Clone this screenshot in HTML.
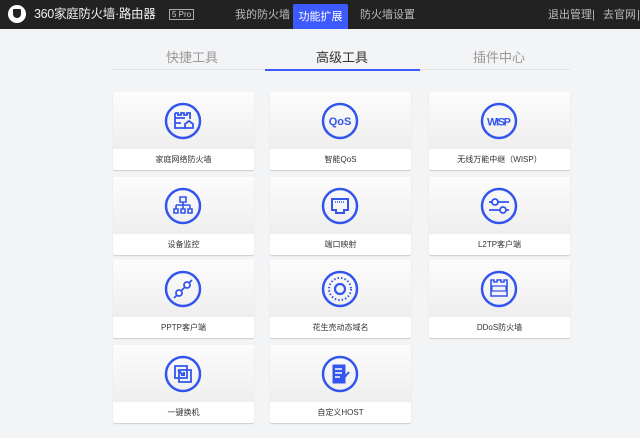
<!DOCTYPE html>
<html><head><meta charset="utf-8"><style>
*{margin:0;padding:0;box-sizing:border-box}
body{width:640px;height:438px;background:#f3f4f6;font-family:"Liberation Sans","Noto Sans CJK SC",sans-serif;position:relative;overflow:hidden}
.hd{position:absolute;left:0;top:0;width:640px;height:29px;background:#222;color:#bbb;font-size:11px}
.hd span{position:absolute;top:9px;white-space:nowrap;line-height:13px}
.logo{position:absolute;left:8px;top:5px;width:18px;height:18px;border-radius:50%;background:#fff}
.logo:after{content:"";position:absolute;left:5px;top:4px;width:8px;height:9px;background:#222;border-radius:1px 1px 4px 4px}
.brand{left:34px;color:#eee;font-size:12.5px!important;top:8px!important;letter-spacing:-0.3px}
.pro{position:absolute;left:169px;top:9px;border:1px solid #aaa;color:#ccc;font-size:8px;padding:0 2px;line-height:9px;white-space:nowrap}
.act{position:absolute;left:293px;top:4px;width:55px;height:25px;background:#3d5afe;color:#fff;font-size:11px;text-align:center;line-height:27px;border-radius:2px 2px 0 0}
.st{position:absolute;top:47px;font-size:13px;color:#999}
.line{position:absolute;left:112px;top:69px;width:458px;height:1px;background:#e2e3e6}
.uline{position:absolute;left:265px;top:69px;width:155px;height:2px;background:#3d5afe}
.card{position:absolute;width:141px;height:78px;background:#fff;border-radius:2px;box-shadow:0 1px 1px #ccc}
.top{height:57px;background:linear-gradient(#fcfcfc,#eeeeee);border-radius:2px 2px 0 0;position:relative}
.top svg{position:absolute;left:51px;top:10px}
.lb{font-size:8px;color:#333;text-align:center;line-height:21px}
</style></head><body>
<div class="hd"><div class="logo"></div><span class="brand">360家庭防火墙·路由器</span><div class="pro">5 Pro</div>
<span style="left:235px">我的防火墙</span><div class="act">功能扩展</div><span style="left:360px">防火墙设置</span>
<span style="left:548px">退出管理</span><span style="left:592px">|</span><span style="left:603px">去官网</span><span style="left:637px">|</span></div>
<div class="st" style="left:166px">快捷工具</div><div class="st" style="left:316px;color:#333">高级工具</div><div class="st" style="left:473px">插件中心</div>
<div class="line"></div><div class="uline"></div>

<div class="card" style="left:113px;top:92px"><div class="top"><svg width="38" height="38" viewBox="0 0 38 38" fill="none" stroke="#3355ee" stroke-width="2.5"><circle cx="19" cy="19" r="17"/><path d="M11 11v15h10M11 11h3v2h3v-2h3v2h3v-2h3v6M11 16h10M11 21h6" stroke-width="1.8"/><path d="M21 26v-4l4-3 4 3v4z" stroke-width="1.8"/></svg></div><div class="lb">家庭网络防火墙</div></div>
<div class="card" style="left:270px;top:92px"><div class="top"><svg width="38" height="38" viewBox="0 0 38 38" fill="none" stroke="#3355ee" stroke-width="2.5"><circle cx="19" cy="19" r="17"/><text x="19" y="23" text-anchor="middle" font-size="11" font-weight="bold" fill="#3355ee" stroke="none" font-family="Liberation Sans">QoS</text></svg></div><div class="lb">智能QoS</div></div>
<div class="card" style="left:429px;top:92px"><div class="top"><svg width="38" height="38" viewBox="0 0 38 38" fill="none" stroke="#3355ee" stroke-width="2.5"><circle cx="19" cy="19" r="17"/><text x="19" y="23.5" text-anchor="middle" font-size="11" font-weight="bold" fill="#3355ee" stroke="none" font-family="Liberation Sans" textLength="24">WISP</text></svg></div><div class="lb">无线万能中继（WISP）</div></div>

<div class="card" style="left:113px;top:177px"><div class="top"><svg width="38" height="38" viewBox="0 0 38 38" fill="none" stroke="#3355ee" stroke-width="2.5"><circle cx="19" cy="19" r="17"/><path d="M16 10h6v5h-6zM19 15v3M12 18h14M12 18v4M19 18v4M26 18v4M10 22h4v4h-4zM17 22h4v4h-4zM24 22h4v4h-4z" stroke-width="1.6"/></svg></div><div class="lb">设备监控</div></div>
<div class="card" style="left:270px;top:177px"><div class="top"><svg width="38" height="38" viewBox="0 0 38 38" fill="none" stroke="#3355ee" stroke-width="2.5"><circle cx="19" cy="19" r="17"/><path d="M11 12h16v11h-4v3h-8v-3h-4z" stroke-width="2"/><path d="M14 15h10" stroke-width="1.5" stroke-dasharray="1 1"/></svg></div><div class="lb">端口映射</div></div>
<div class="card" style="left:429px;top:177px"><div class="top"><svg width="38" height="38" viewBox="0 0 38 38" fill="none" stroke="#3355ee" stroke-width="2.5"><circle cx="19" cy="19" r="17"/><path d="M9 15h20M9 23h20" stroke-width="1.8"/><circle cx="15" cy="15" r="3" fill="#fff" stroke-width="1.8"/><circle cx="23" cy="23" r="3" fill="#fff" stroke-width="1.8"/></svg></div><div class="lb">L2TP客户端</div></div>

<div class="card" style="left:113px;top:260px"><div class="top"><svg width="38" height="38" viewBox="0 0 38 38" fill="none" stroke="#3355ee" stroke-width="2.5"><circle cx="19" cy="19" r="17"/><path d="M10 28l18-18" stroke-width="1.8"/><circle cx="15" cy="23" r="3" fill="#fff" stroke-width="1.8"/><circle cx="23" cy="15" r="3" fill="#fff" stroke-width="1.8"/></svg></div><div class="lb">PPTP客户端</div></div>
<div class="card" style="left:270px;top:260px"><div class="top"><svg width="38" height="38" viewBox="0 0 38 38" fill="none" stroke="#3355ee" stroke-width="2.5"><circle cx="19" cy="19" r="17"/><circle cx="19" cy="19" r="11" stroke-width="2" stroke-dasharray="1.5 2"/><circle cx="19" cy="19" r="5" stroke-width="2.2"/></svg></div><div class="lb">花生壳动态域名</div></div>
<div class="card" style="left:429px;top:260px"><div class="top"><svg width="38" height="38" viewBox="0 0 38 38" fill="none" stroke="#3355ee" stroke-width="2.5"><circle cx="19" cy="19" r="17"/><path d="M11 10v16h16v-16h-3v2h-3v-2h-4v2h-3v-2z" stroke-width="1.6"/><path d="M12 16h14v5h-14z" stroke-width="1.2"/></svg></div><div class="lb">DDoS防火墙</div></div>

<div class="card" style="left:113px;top:345px"><div class="top"><svg width="38" height="38" viewBox="0 0 38 38" fill="none" stroke="#3355ee" stroke-width="2.5"><circle cx="19" cy="19" r="17"/><path d="M11 11h12v12h-12zM15 15h12v12h-12z" stroke-width="1.8"/><path d="M14 15l5 5M17 20h3v-3" stroke-width="2"/></svg></div><div class="lb">一键换机</div></div>
<div class="card" style="left:270px;top:345px"><div class="top"><svg width="38" height="38" viewBox="0 0 38 38" fill="none" stroke="#3355ee" stroke-width="2.5"><circle cx="19" cy="19" r="17"/><path d="M12 10h12v18h-12z" fill="#3355ee" stroke-width="1"/><path d="M14 14h7M14 18h7M14 22h5" stroke="#fff" stroke-width="1.4"/><path d="M22 24l6-7" stroke-width="2"/></svg></div><div class="lb">自定义HOST</div></div>
</body></html>
